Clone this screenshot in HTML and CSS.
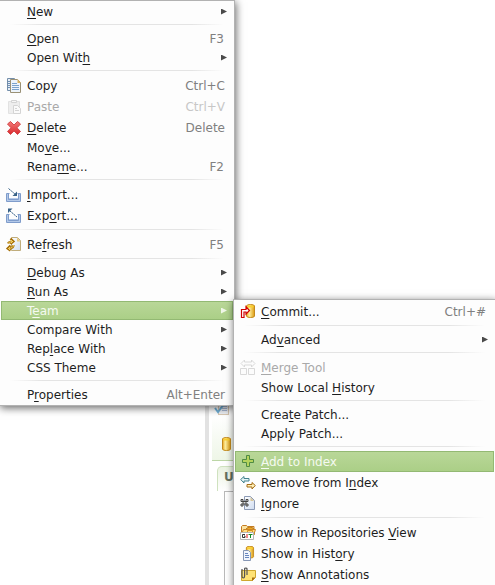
FILE: index.html
```
<!DOCTYPE html>
<html lang="en">
<head>
<meta charset="utf-8">
<title>Context menu</title>
<link rel="stylesheet" href="styles.css">
</head>
<body>
<div class="desktop">
  <div class="workbench">
    <div class="sash"></div>
    <div class="panel">
      <svg class="task" width="16" height="14" viewBox="0 0 16 14"><rect x="4.500" y="1.500" width="10" height="11" fill="#eef1f6" stroke="#d8c8b2"/><path d="M8 4.500h5M8 6.500h5M8 8.500h5" stroke="#a9bad6"/><path d="M1 6l3 4 6-8" fill="none" stroke="#6fb0d8" stroke-width="2"/></svg>
      <div class="toolbar"><svg width="11" height="16" viewBox="0 0 11 16"><use href="#cylinder"/></svg></div>
      <div class="tab">U</div>
      <div class="view"></div>
    </div>
  </div>

  <svg class="defs" width="0" height="0">
    <defs>
      <linearGradient id="gold"><stop offset="0" stop-color="#e8a11c"/><stop offset=".35" stop-color="#fff0a0"/><stop offset="1" stop-color="#dd9a10"/></linearGradient>
      <linearGradient id="paper" x2="1" y2="1"><stop offset="0" stop-color="#fff"/><stop offset="1" stop-color="#cfdcf0"/></linearGradient>
      <linearGradient id="red" x2="0" y2="1"><stop offset="0" stop-color="#f37a78"/><stop offset="1" stop-color="#d9282c"/></linearGradient>
      <g id="cylinder"><path d="M1.500 3q0-1.500 4-1.500t4 1.500v10q0 1.500-4 1.500t-4-1.500z" fill="url(#gold)" stroke="#c48a1c"/><path d="M2.500 3.500h6" stroke="#fbd030" stroke-width="2"/></g>
      <path id="tray" d="M.5 6.500h3M.5 6.500v8h14v-8h-3M2.500 7v5.500h10V7" fill="none" stroke="#7f9ccb"/>
      <path id="trayfill" d="M1 7h2v4h9V7h2v7H1z" fill="#b4c9e8"/>
    </defs>
  </svg>

  <div class="menu main">
    <div class="item"><span><u>N</u>ew</span><i class="arrow"></i></div>
    <hr>
    <div class="item"><span><u>O</u>pen</span><kbd class="fn">F3</kbd></div>
    <div class="item"><span>Open Wit<u>h</u></span><i class="arrow"></i></div>
    <hr>
    <div class="item tall"><svg class="icon" viewBox="0 0 16 16"><path d="M1.500 .5h7v12h-7z" fill="#e8eef5" stroke="#738eaa"/><path d="M2 3.500h3M2 5.500h3M2 7.500h3M2 9.500h3" stroke="#6f91b6"/><path d="M4.500 1.500h7l3 3v10h-10z" fill="#edf4fb" stroke="#9a9176"/><path d="M11.500 1v4h3.500z" fill="#d8b260"/><path d="M6 5.500h5M6 7.500h7M6 9.500h7M6 11.500h7" stroke="#7aa2cc"/></svg><span>Copy</span><kbd>Ctrl+C</kbd></div>
    <div class="item tall disabled"><svg class="icon" viewBox="0 0 16 16"><path d="M2.500 2.500h11v12h-11z" fill="#eee" stroke="#e2e2e2"/><path d="M5.500 3.500v-2h5v2z" fill="#f7f7f7" stroke="#d4d4d4"/><path d="M7.500 6.500h4l3 3v5h-7z" fill="#fafafa" stroke="#d4d4d4"/><path d="M9 9.500h2M9 11.500h4" stroke="#d4d4d4"/></svg><span>Paste</span><kbd>Ctrl+V</kbd></div>
    <div class="item tall"><svg class="icon" viewBox="0 0 16 16"><path d="M4.500 1.500L8 5l3.500-3.500L14.500 4 11 7.800l3.500 3.700-3 3L8 11l-3.500 3.500-3-3L5 7.800 1.500 4z" fill="url(#red)" stroke="#d3494b" stroke-linejoin="round"/></svg><span><u>D</u>elete</span><kbd>Delete</kbd></div>
    <div class="item"><span>Mo<u>v</u>e...</span></div>
    <div class="item"><span>Rena<u>m</u>e...</span><kbd class="fn">F2</kbd></div>
    <hr>
    <div class="item tall"><svg class="icon" viewBox="0 0 16 16"><use href="#trayfill"/><use href="#tray"/><path d="M2.500 1.500l7 6" stroke="#fff" stroke-width="3"/><path d="M2.500 1.500l7 6" stroke="#376187" stroke-dasharray="2 .5"/><path d="M11 4.500V9H6.500z" fill="#376187"/></svg><span><u>I</u>mport...</span></div>
    <div class="item tall"><svg class="icon" viewBox="0 0 16 16"><use href="#trayfill"/><use href="#tray"/><path d="M4 3l7 6" stroke="#fff" stroke-width="3"/><path d="M4 3l7 6" stroke="#376187" stroke-dasharray="2 .5"/><path d="M2 5V.5h4.500z" fill="#376187"/></svg><span>Exp<u>o</u>rt...</span></div>
    <hr>
    <div class="item tall"><svg class="icon" viewBox="0 0 16 16"><path d="M5.500 .5h6l3 3v10h-9z" fill="url(#paper)" stroke="#c0ad7c"/><path d="M11 .5v4h3.500z" fill="#e8c97e"/><path d="M2 6.500q1-2 4-2M4.500 1.500l3 3-3 2.500M7.500 8q0 3-4 3.500M4.500 8.500l-3 3 3 2" fill="none" stroke="#a66f09" stroke-width="2.200"/><path d="M2 6.500q1-2 5-2M7.500 8q0 3-5 3.500M5 3l1.500 1.500L5 6M4 10l-1.500 1.500L4 13" fill="none" stroke="#f8d970" stroke-width=".9"/></svg><span>Re<u>f</u>resh</span><kbd class="fn">F5</kbd></div>
    <hr>
    <div class="item"><span><u>D</u>ebug As</span><i class="arrow"></i></div>
    <div class="item"><span><u>R</u>un As</span><i class="arrow"></i></div>
    <div class="item selected"><span>T<u>e</u>am</span><i class="arrow"></i></div>
    <div class="item"><span>Compare With</span><i class="arrow"></i></div>
    <div class="item"><span>Rep<u>l</u>ace With</span><i class="arrow"></i></div>
    <div class="item"><span>CSS Theme</span><i class="arrow"></i></div>
    <hr>
    <div class="item"><span>P<u>r</u>operties</span><kbd>Alt+Enter</kbd></div>
  </div>

  <div class="menu sub">
    <div class="item tall"><svg class="icon" viewBox="0 0 16 16"><g transform="translate(5 -1)"><use href="#cylinder"/></g><path d="M1.500 13.500v-8h4.500V2.800L9.500 6.500 6 10V8H4v5.500z" fill="#fff" stroke="#d00000" stroke-width="1.200"/></svg><span><u>C</u>ommit...</span><kbd>Ctrl+#</kbd></div>
    <hr>
    <div class="item"><span>Ad<u>v</u>anced</span><i class="arrow"></i></div>
    <hr>
    <div class="item tall disabled"><svg class="icon" viewBox="0 0 16 16"><path d="M1 3.500L4.500 0v2h7V0L15 3.500 11.500 7V5h-7v2zM.5 8.500h6v6h-6zM8.500 8.500h6v6h-6z" fill="#fcfcfc" stroke="#d9d9d9"/></svg><span><u>M</u>erge Tool</span></div>
    <div class="item"><span>Show Local <u>H</u>istory</span></div>
    <hr>
    <div class="item"><span>Crea<u>t</u>e Patch...</span></div>
    <div class="item"><span>Apply Patch...</span></div>
    <hr>
    <div class="item tall selected"><svg class="icon" viewBox="0 0 16 16"><path d="M6.500 1.500h3v4h4v3h-4v4h-3v-4h-4v-3h4z" fill="#b4d35c" stroke="#4f8b43"/></svg><span><u>A</u>dd to Index</span></div>
    <div class="item tall"><svg class="icon" viewBox="0 0 16 16"><path d="M.7 4.500L4 1.500v2h5v2.500H4v2z" fill="#e4f4f5" stroke="#43818e"/><path d="M15.300 10.500L12 7.500v2H7V12h5v2z" fill="#fff0b8" stroke="#a46b13"/></svg><span>Remove from I<u>n</u>dex</span></div>
    <div class="item tall"><svg class="icon" viewBox="0 0 16 16"><path d="M4.500 .5h6l4 4v9h-10z" fill="url(#paper)" stroke="#8c9ab5"/><path d="M10.500 1v4h3.500z" fill="#d7c69a"/><path d="M1 3.500h2v2H1zM6 3.500h2v2H6zM1 8h2v2H1zM6 8h2v2H6zM3 5.500h3V8H3z" fill="#ddd" stroke="#454545"/></svg><span><u>I</u>gnore</span></div>
    <hr>
    <div class="item tall"><svg class="icon" viewBox="0 0 16 16"><path d="M1.500 9V1.500l1-1h4l1 1h6.500v8H1.500z" fill="#fbe3a2" stroke="#c57b21"/><path d="M6 4q4-4 8 0v6H6z" fill="#eda822" stroke="#b8761a"/><path d="M1.500 9l2-4.500h12l-2 6h-12z" fill="#ffdc80" stroke="#cb8424"/><path d="M7.500 7V5.500h5V7" fill="none" stroke="#d9911f"/><path d="M.5 7.500h13v7H.5z" fill="#fff" stroke="#b5b5b5"/><path d="M5 9.500H2.500v3H5V11H4" fill="none" stroke="#333"/><path d="M7 9v4" stroke="#e01010"/><path d="M8.500 9.500h4M10.500 9v4" stroke="#168a22"/></svg><span class="tight">Show in Repositories <u>V</u>iew</span></div>
    <div class="item tall"><svg class="icon" viewBox="0 0 16 16"><g transform="translate(5 -1) scale(.9)"><use href="#cylinder"/></g><path d="M3.500 4.500h5l2 2v8h-7z" fill="#f1f5fc" stroke="#8797b5"/><path d="M5 7.500h3M5 9.500h4M5 11.500h4" stroke="#6786be"/></svg><span>Show in Hist<u>o</u>ry</span></div>
    <div class="item tall"><svg class="icon" viewBox="0 0 16 16"><path d="M1.500 3.500h14v7l-3 3h-11z" fill="#ffe274" stroke="#cfa72f"/><path d="M12 14v-3.500h3.500z" fill="#a8700e"/><path d="M2 2v7q0 2 1.300 2t1.300-2V2q0-1 1.200-1T7 2v6" fill="none" stroke="#555" stroke-width="1.200"/></svg><span><u>S</u>how Annotations</span></div>
  </div>
</div>
</body>
</html>
```
FILE: styles.css
```
* { box-sizing: border-box; }

body {
  margin: 0;
  background: #fff;
  font: 12px "DejaVu Sans", sans-serif;
  color: #1e1e1e;
}

.desktop {
  position: relative;
  width: 495px;
  height: 585px;
  overflow: hidden;
}

.defs { position: absolute; }

/* Workbench window behind the menus */
.workbench {
  display: flex;
  width: 100%;
  height: 100%;
  padding: 400px 0 0 205px;
}
.sash { width: 4px; background: #e2e2e2; }
.panel { flex: 1; padding-left: 3px; }
.task { display: block; margin: 2px 0 0 2px; }
.toolbar {
  height: 45px;
  padding: 20px 0 0 9px;
  background: linear-gradient(#fff, #eef6e7);
  border-bottom: 1px solid #bcd6a6;
}
.tab {
  height: 25px;
  margin: 5px 0 0 5px;
  padding: 3px 0 0 6px;
  border: 1px solid #cfe2bf;
  border-bottom: 0;
  border-radius: 5px 0 0 0;
  background: linear-gradient(#eaf3e1, #fff);
  font-weight: bold;
  color: #66705f;
}
.view {
  height: 100px;
  margin-left: 12px;
  border: 1px solid #b9b9b9;
}

/* Menus */
.menu {
  position: absolute;
  border: 1px solid #b2b2b2;
  background: #fdfdfd;
  padding: 1px 0;
  box-shadow: 1px 2px 8px rgba(0, 0, 0, .6);
}
.main { left: -1px; top: 0; width: 236px; height: 406px; }
.sub { left: 233px; top: 299px; width: 263px; height: 310px; }

.item {
  display: flex;
  align-items: center;
  position: relative;
  height: 19px;
  margin: 0 1px;
  padding: 0 7px 0 25px;
  border: 1px solid transparent;
  white-space: pre;
}
.item.tall { height: 21px; }
.item.disabled { color: #a9a9a9; }
.item.selected {
  border-color: #93b973;
  background: linear-gradient(#b9d798, #abcf87);
  color: #f5faf0;
}

.icon {
  width: 16px;
  height: 16px;
  margin: 0 5px 0 -21px;
  flex: none;
}

kbd {
  margin-left: auto;
  font: inherit;
  color: #808080;
}
.fn { margin-right: 1px; }
.disabled kbd { color: #c7c7c7; }
.tight { letter-spacing: -.06px; }

u {
  text-decoration: underline;
  text-underline-offset: 2px;
  text-decoration-thickness: 1px;
  text-decoration-skip-ink: none;
}

.arrow {
  width: 6px;
  height: 6px;
  margin: 0 -2px 0 auto;
  background: #4a4a4a;
  clip-path: polygon(0 0, 100% 50%, 0 100%);
}
.selected .arrow { background: #f0f7e9; }

hr {
  height: 1px;
  margin: 3px 10px 4px;
  border: 0;
  background: linear-gradient(90deg, transparent, #e4e4e4 15%, #e4e4e4 85%, transparent);
}
```
